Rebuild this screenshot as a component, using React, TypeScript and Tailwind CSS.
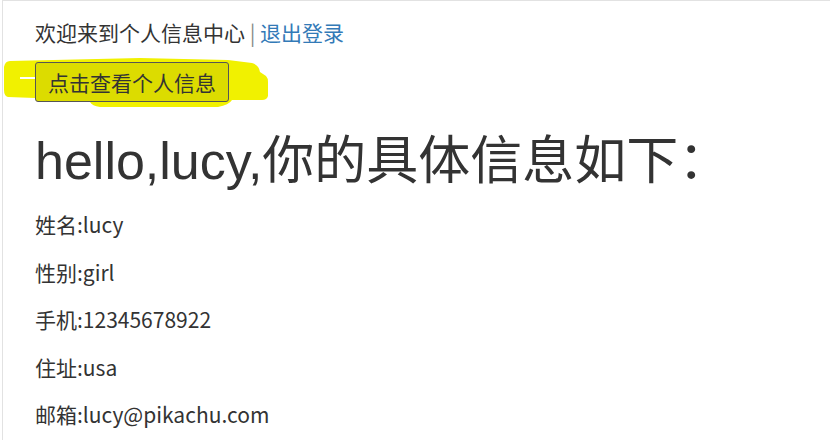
const info = [
  { label: "姓名", value: "lucy" },
  { label: "性别", value: "girl" },
  { label: "手机", value: "12345678922" },
  { label: "住址", value: "usa" },
  { label: "邮箱", value: "lucy@pikachu.com" },
];

function Highlight() {
  // hand-drawn marker stroke round the button
  return (
    <svg
      className="absolute left-[-35px] top-[-12px] pointer-events-none"
      width="280"
      height="65"
      viewBox="0 0 280 65"
    >
      <path
        d="M10 11 L140 8 L228 10 L252 13 Q259 15 260 22 L266 26 Q268 28 268 32 L268 46 Q267 50 262 50 L232 50 Q229 55 218 57 L100 57 Q92 56 90 52 L35 48 L8 47 Q4 46 4 40 L4 17 Q5 11 10 11 Z"
        fill="#f1f100"
      />
      <path d="M20 28 L36 28" stroke="#ffffff" strokeWidth="2" />
    </svg>
  );
}

export default function App() {
  return (
    <div className="min-h-screen bg-white ml-[2px] border-t border-l border-[#e2e2e2] text-[#333] font-['Noto_Sans_CJK_SC',sans-serif]">
      <div className="pl-[32px] pt-[16px]">
        {/* Top bar */}
        <div className="text-[21px] leading-[30px]">
          欢迎来到个人信息中心 <span className="text-[#8a8a8a]">|</span>{" "}
          <a href="#" className="text-[#337ab7]">
            退出登录
          </a>
        </div>

        {/* Button with marker highlight */}
        <div className="relative mt-[15px] w-fit">
          <Highlight />
          <button className="relative z-10 h-[40px] px-[12px] border border-[#555] rounded-[3px] bg-[#dcdc00] text-[21px] leading-[28px] text-[#333]">
            点击查看个人信息
          </button>
        </div>

        <h1 className="mt-[31px] text-[52px] leading-[57px] font-normal font-['Liberation_Sans','Noto_Sans_CJK_SC',sans-serif]">
          hello,lucy,你的具体信息如下：
        </h1>

        <div className="mt-[19px] flex flex-col gap-[17.6px]">
          {info.map((row) => (
            <p key={row.label} className="text-[21px] leading-[30px]">
              {row.label}:{row.value}
            </p>
          ))}
        </div>
      </div>
    </div>
  );
}
